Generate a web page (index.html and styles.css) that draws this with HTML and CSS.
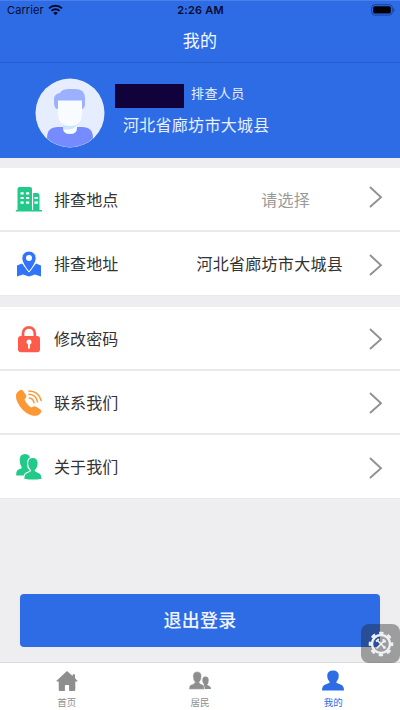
FILE: index.html
```html
<!DOCTYPE html>
<html lang="zh-CN">
<head>
<meta charset="utf-8">
<meta name="viewport" content="width=device-width, initial-scale=1">
<title>我的</title>
<link rel="stylesheet" href="styles.css">
</head>
<body>
<div class="app">
  <header class="top">
    <div class="status">
      <div class="carrier"><span>Carrier</span>
        <svg width="15" height="12" viewBox="0 0 15 12" fill="none" stroke="#080a2c"><path d="M1 4.400a9.400 9.400 0 0 1 13 0" stroke-width="2"/><path d="M3.400 6.900a5.900 5.900 0 0 1 8.200 0" stroke-width="1.800"/><path d="M7.500 11.200 5.200 8.900a3.300 3.300 0 0 1 4.600 0z" fill="#080a2c" stroke="none"/></svg>
      </div>
      <span class="clock">2:26 AM</span>
      <svg class="battery" width="24" height="12" viewBox="0 0 24 12"><rect x=".7" y=".7" width="20.600" height="10.400" rx="3" fill="none" stroke="#1d3f9b"/><rect x="2.200" y="2.200" width="17.600" height="7.400" rx="1.600" fill="#000008"/><path d="M22.300 4v4q1.200-.6 1.200-2t-1.200-2z" fill="#1d3f9b"/></svg>
    </div>
    <h1>我的</h1>
  </header>
  <section class="profile">
    <svg class="avatar" width="70" height="70" viewBox="0 0 70 70">
      <defs><clipPath id="face"><circle cx="35" cy="35" r="34.200"/></clipPath></defs>
      <circle cx="35" cy="35" r="34.500" fill="#e5edff"/>
      <g clip-path="url(#face)">
        <path d="M12 70V60q0-11 11-11h24q11 0 11 11v10z" fill="#768bff"/>
        <path d="M28 42h14v8q0 6-7 6t-7-6z" fill="#f8fcff"/>
        <path d="M28 46h14v1q-4 6-14 4z" fill="#c9e8ff"/>
        <path d="M22 31q-3-1-3-7v-3q0-5 6-6 2-4 9-4h7q9 0 9 10v5q0 4-3 5z" fill="#9bb0ff"/>
        <path d="M23 22.500h24V35q0 13-12 13T23 35z" fill="#f8fcff"/>
      </g>
    </svg>
    <div class="person">
      <div class="identity"><span class="mask"></span><span class="role">排查人员</span></div>
      <div class="region">河北省廊坊市大城县</div>
    </div>
  </section>
  <main>
    <ul class="group">
      <li class="row">
        <svg class="icon" width="28" height="28" viewBox="0 0 28 28"><path d="M1 25h1.500V4q0-2 2-2h10.500q2 0 2 2v21h1V9.500V8h4q2.500 0 2.500 2.500V25H27v1.500H.7z" fill="#22ca8a"/><path d="M17.600 5v20" stroke="#fff"/><path d="M5.500 8.300h3.200m2.300 0h3.200M5.500 13h3.200m2.300 0h3.200M5.500 17.700h3.200m2.300 0h3.200M19.500 13h3.400m-3.400 4.700h3.400" stroke="#fff" stroke-width="2.200"/></svg>
        <span class="label">排查地点</span><span class="value pick">请选择</span>
        <svg class="arrow up" width="14" height="22" viewBox="0 0 14 22"><path d="m1.500 1.500 10.500 9.700L1.500 20.500"/></svg>
      </li>
      <li class="row">
        <svg class="icon" width="28" height="28" viewBox="0 0 28 28"><path d="m2 15.500 5-2 7 9 7-9 5 2v11l-6-2-6 2-6-2-6 2z" fill="#2f74fa"/><path d="M14 22Q6.800 13 6.800 8.200a7.200 7.200 0 0 1 14.400 0Q21.200 13 14 22z" fill="#2f74fa" stroke="#fff" stroke-width="1"/><circle cx="14" cy="8" r="3" fill="#fff"/></svg>
        <span class="label">排查地址</span><span class="value address">河北省廊坊市大城县</span>
        <svg class="arrow" width="14" height="22" viewBox="0 0 14 22"><path d="m1.500 1.500 10.500 9.700L1.500 20.500"/></svg>
      </li>
    </ul>
    <ul class="group">
      <li class="row">
        <svg class="icon" width="28" height="28" viewBox="0 0 28 28"><path d="M8 12V8.200a5.900 5.900 0 0 1 11.800 0V12" fill="none" stroke="#ff5b4a" stroke-width="2.700"/><rect x="3" y="11" width="22" height="16.200" rx="3" fill="#ff5b4a"/><circle cx="14" cy="17" r="2.500" fill="#fff"/><path d="M14 17v5.700" stroke="#fff" stroke-width="2" stroke-linecap="round"/></svg>
        <span class="label">修改密码</span>
        <svg class="arrow" width="14" height="22" viewBox="0 0 14 22"><path d="m1.500 1.500 10.500 9.700L1.500 20.500"/></svg>
      </li>
      <li class="row">
        <svg class="icon" width="28" height="28" viewBox="0 0 28 28"><path d="M4.500 1.500Q6.500-.2 8 1.800L11 6Q12 8 9.700 10 9.500 11.500 11.500 14 14 17.500 16.300 18.600L18.500 17.500Q20 17 21.500 18L25.400 20.500Q27.200 22 25.800 23.700 23 27.600 18 26.700 10.500 25 5.300 18-.5 9.500 1.500 4.500 2.200 3 4.500 1.500z" fill="#fd9835"/><path d="M14.300 8.900q4.100.5 4.700 4.800M13.900 5.300q7.200.3 8.600 7.500M13.900 1.900Q23.500 2 26.200 11.500" fill="none" stroke="#fd9835" stroke-width="1.500" stroke-linecap="round"/></svg>
        <span class="label">联系我们</span>
        <svg class="arrow" width="14" height="22" viewBox="0 0 14 22"><path d="m1.500 1.500 10.500 9.700L1.500 20.500"/></svg>
      </li>
      <li class="row">
        <svg class="icon" width="28" height="28" viewBox="0 0 28 28" fill="#22ca8a"><path d="M1.200 22.500q-.4-5.500 3.500-6.400 2-.5 2.100-1.600Q4.700 11.800 4.700 7q0-6 5.300-6t5.300 6q0 5-2.800 7.300.5 1.800 2.300 2.200 4 1 4.300 6z"/><path d="M8.900 26.200q-.5-5.800 4-7 2.400-.6 2.700-1.500-3-2.700-3-7 0-6.300 5.300-6.300t5.300 6.300q0 4.300-3 7 .3.900 2.700 1.500 4.500 1.200 4 7-9 1.900-18 0z" stroke="#fff" stroke-width="1.100"/></svg>
        <span class="label">关于我们</span>
        <svg class="arrow" width="14" height="22" viewBox="0 0 14 22"><path d="m1.500 1.500 10.500 9.700L1.500 20.500"/></svg>
      </li>
    </ul>
    <button class="logout" type="button">退出登录</button>
  </main>
  <nav class="tabs">
    <a class="tab"><svg width="24" height="24" viewBox="0 0 24 24"><path d="M12 2 1.500 11.700q-.5.800.5.800h1.700v8.300q0 1.200 1.200 1.200h5v-5.300q0-.7.700-.7h2.800q.7 0 .7.700V22h5q1.200 0 1.200-1.200v-8.300H22q1 0 .5-.8L20 9.200V6q0-.7-.7-.7h-1q-.7 0-.7.700v1z"/></svg><span>首页</span></a>
    <a class="tab"><svg width="24" height="24" viewBox="0 0 24 24"><path d="M14.800 20q1-1.900 0-3.500l1.500-1q-2-1.700-2-4.200 0-3.800 3.200-3.800t3.200 3.800q0 2.500-1.500 4.200.1.900 2 1.500 2 .6 1.800 3z"/><path d="M.9 20.400q-.2-4.100 2.600-4.900 3-.8 3.400-2Q4.800 11 4.800 7.400q0-4.800 4.400-4.800t4.400 4.800q0 3.600-2.300 6.100.2 1.200 3.200 2 2.200.8 2 4.900z" stroke="#fff" stroke-width=".6"/></svg><span>居民</span></a>
    <a class="tab active"><svg width="24" height="24" viewBox="0 0 24 24"><path d="M1 21.600q-.2-5 3.500-6.200l3.600-1.300q1-.5.400-1.400Q6.200 10.500 6.200 7q0-5.500 5.800-5.500T17.800 7q0 3.500-2.300 5.700-.6.900.4 1.400l3.600 1.300q3.700 1.200 3.500 6.200z"/></svg><span>我的</span></a>
  </nav>
  <div class="tool">
    <svg width="26" height="26" viewBox="0 0 26 26" fill="none" stroke="#eef0f5"><circle cx="13" cy="13" r="9" stroke-width="2.400"/><circle cx="13" cy="13" r="11" stroke-width="2.600" stroke-dasharray="4.320 4.320" stroke-dashoffset="2.160"/><path d="m9.500 9.500 7.500 7.500M16.500 9.500 9 17" stroke-width="1.700" stroke-linecap="round"/><path d="m8 10.600 2.800-2.800M15.500 8v2.500H18M15.300 17.300l2-2" stroke-width="1.800"/></svg>
  </div>
</div>
</body>
</html>
```
FILE: styles.css
```css
* { box-sizing: border-box; }
body { margin: 0; background: #eeeef0; font-family: "Noto Sans CJK SC", sans-serif; color: #333; }
.app { position: relative; width: 400px; height: 710px; display: flex; flex-direction: column; overflow: hidden; }
.top { height: 63px; background: #2e6ce6; border-bottom: 1px solid #285fd0; border-top: 1px solid #4a80ee; }
.status { height: 19px; padding: 0 5px 0 7px; display: grid; grid-template-columns: 1fr auto 1fr; align-items: center; color: #080a2c; font-family: Inter, sans-serif; font-size: 11px; line-height: 19px; }
.carrier { display: flex; align-items: center; gap: 5px; letter-spacing: .1px; }
.carrier svg { margin: -1px 0 0 -1px; }
.clock { font-weight: 600; letter-spacing: .2px; margin-left: -1px; }
.battery { justify-self: end; margin-top: -1px; }
h1 { margin: 8px 0 0; font-size: 17px; font-weight: 400; line-height: 24px; text-align: center; color: #f4f9ff; letter-spacing: .2px; }
.profile { height: 95px; background: #2e6ce6; padding: 15px 0 0 35px; display: flex; gap: 10px; }
.person { padding-top: 6px; color: #e7f0ff; }
.identity { display: flex; align-items: flex-start; gap: 7px; height: 25px; }
.mask { width: 69px; height: 24px; background: #12023c; }
.role { font-size: 13px; line-height: 20px; letter-spacing: .4px; margin-top: -1px; }
.region { margin: 3px 0 0 8px; font-size: 16px; line-height: 24px; letter-spacing: .28px; }
main { flex: 1; padding-top: 10px; }
.group { margin: 0 0 11px; padding: 0; list-style: none; }
.row { height: 64px; padding: 0 17px 0 15px; display: flex; align-items: center; background: #fff; border-bottom: 2px solid #e9e9eb; font-size: 16px; line-height: 24px; }
.row:last-child { border-bottom-width: 1px; }
.group:nth-child(2) .row .icon { margin-top: 1px; }
.icon { flex: none; margin-right: 11px; }
.label { flex: none; letter-spacing: .1px; margin-top: -1px; }
.value { margin: -1px 26px 0 auto; letter-spacing: .28px; }
.pick { color: #9a9a9a; margin-right: 59px; }
.arrow { flex: none; fill: none; stroke: #919191; stroke-width: 1.9; stroke-linecap: round; margin-top: 2px; }
.arrow.up { margin-top: -4px; }
.row > .label + .arrow { margin-left: auto; }
.logout { display: block; width: 360px; height: 53px; margin: 95px 20px 0; padding: 0 0 3px; border: 0; border-radius: 4px; background: #2e6ce6; color: #f0f6ff; font: 500 18px/26px "Noto Sans CJK SC", sans-serif; letter-spacing: .3px; }
.tabs { height: 48px; background: #fff; border-top: 1px solid #dcdcde; display: grid; grid-template-columns: repeat(3, 1fr); }
.tab { display: flex; flex-direction: column; align-items: center; padding-top: 6px; font-size: 9.500px; line-height: 14px; color: #8e8e8e; fill: #8e8e8e; }
.tab span { margin-top: 2px; }
.active { color: #2e6ce6; fill: #2e6ce6; }
.tool { position: absolute; left: 361px; top: 624px; width: 39px; height: 39px; border-radius: 8px; background: rgba(35, 35, 35, .4); display: flex; align-items: center; justify-content: center; }
```
